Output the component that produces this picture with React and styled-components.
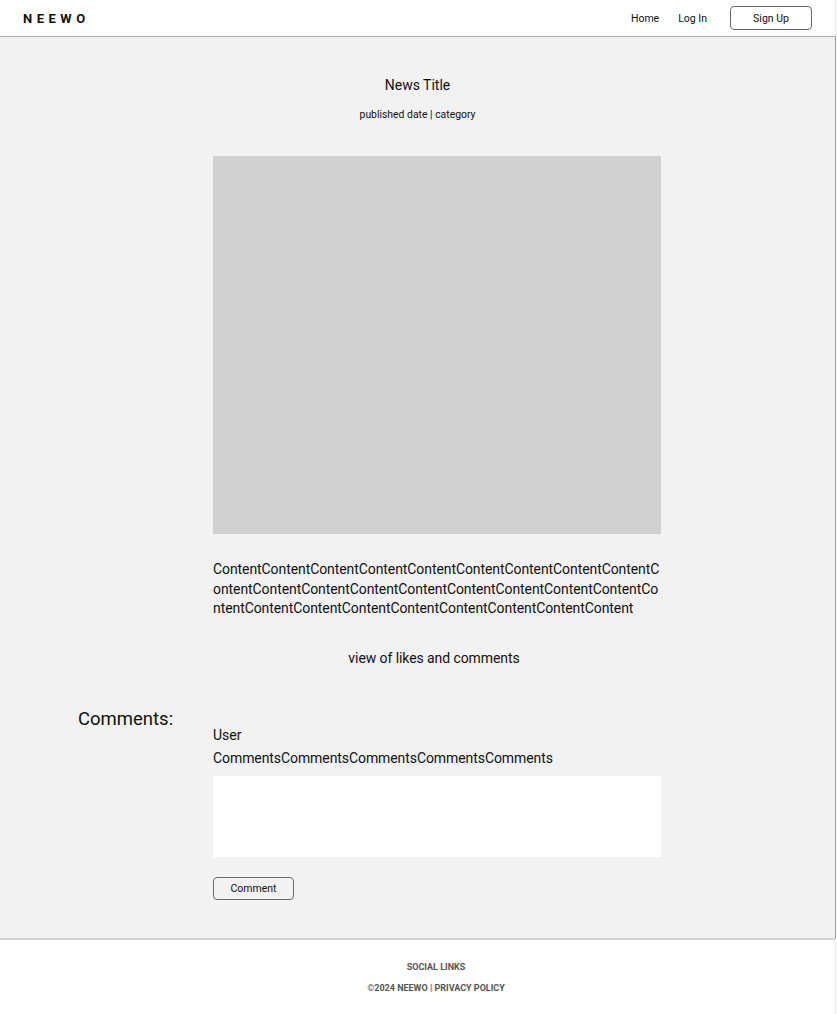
import styled, { createGlobalStyle } from "styled-components"

const GlobalStyle = createGlobalStyle`
    * {
        box-sizing: border-box;
    }

    body {
        margin: 0;
        background: #fff;
        font-family: Roboto, "Liberation Sans", sans-serif;
        color: #111;
    }
`

const Page = styled.div`
    width: 836px;
    display: flex;
    flex-direction: column;
`

const Header = styled.header`
    height: 37px;
    display: flex;
    align-items: center;
    justify-content: space-between;
    padding: 0 23px 0 23px;
    background: #fff;
    border-bottom: 1px solid #b0b0b0;
    border-right: 1px solid #ececec;
`

const Logo = styled.div`
    font-size: 13px;
    font-weight: 700;
    letter-spacing: 4.5px;
`

const Nav = styled.nav`
    display: flex;
    align-items: center;
    gap: 19px;
    font-size: 10.5px;
`

const NavLink = styled.a`
    color: #111;
    text-decoration: none;
    cursor: pointer;
`

const OutlineButton = styled.button`
    width: ${(props) => props.$width};
    height: ${(props) => props.$height};
    margin-left: ${(props) => props.$offset || "0"};
    background: transparent;
    border: 1px solid #6a6a6a;
    border-radius: 4px;
    font-family: Roboto, "Liberation Sans", sans-serif;
    font-size: 10.5px;
    color: #111;
    cursor: pointer;
`

const Main = styled.main`
    background: #f2f2f2;
    border-right: 1px solid #9a9a9a;
    padding: 40px 0 38px;
    display: flex;
    flex-direction: column;
`

const Title = styled.h1`
    margin: 0;
    font-size: 14px;
    font-weight: 400;
    line-height: 16px;
    text-align: center;
`

const Meta = styled.p`
    margin: 15px 0 0;
    font-size: 10.4px;
    line-height: 13px;
    text-align: center;
`

const Column = styled.div`
    width: 448px;
    margin-left: 213px;
    display: flex;
    flex-direction: column;
`

const ImagePlaceholder = styled.div`
    margin-top: 35px;
    height: 378px;
    background: #d0d0d0;
`

const Content = styled.p`
    margin: 26px 0 0;
    font-size: 14px;
    letter-spacing: -0.08px;
    line-height: 19.6px;
    word-break: break-all;
`

const Stats = styled.p`
    margin: 29px 6px 0 0;
    font-size: 14px;
    letter-spacing: -0.08px;
    line-height: 20px;
    text-align: center;
`

const CommentsRow = styled.section`
    margin-top: 39px;
    display: flex;
`

const CommentsLabel = styled.h2`
    width: 213px;
    margin: 0;
    padding-left: 78px;
    font-size: 18.5px;
    font-weight: 400;
    line-height: 24px;
`

const CommentsColumn = styled.div`
    width: 448px;
    padding-top: 18px;
    display: flex;
    flex-direction: column;
    align-items: flex-start;
`

const UserName = styled.div`
    font-size: 14px;
    line-height: 20px;
`

const CommentText = styled.div`
    margin-top: 3px;
    font-size: 14px;
    letter-spacing: -0.08px;
    line-height: 20px;
`

const CommentBox = styled.textarea`
    align-self: stretch;
    margin: 8px 0 20px;
    height: 81px;
    border: none;
    background: #fff;
    resize: none;
    outline: none;
`

const Footer = styled.footer`
    height: 76px;
    padding: 21px 0 0 37px;
    display: flex;
    flex-direction: column;
    align-items: center;
    gap: 9px;
    border-top: 2px solid #d2d2d2;
    border-right: 1px solid #ececec;
    font-size: 9px;
    font-weight: 700;
    color: #555;
    line-height: 12px;
`

export default function App() {
    const content = "Content".repeat(27)
    const comments = "Comments".repeat(5)

    return (
        <>
            <GlobalStyle />
            <Page>
                <Header>
                    <Logo>NEEWO</Logo>
                    <Nav>
                        <NavLink>Home</NavLink>
                        <NavLink>Log In</NavLink>
                        <OutlineButton $width="82px" $height="24px" $offset="4px">Sign Up</OutlineButton>
                    </Nav>
                </Header>

                <Main>
                    <Title>News Title</Title>
                    <Meta>published date | category</Meta>

                    <Column>
                        <ImagePlaceholder />
                        <Content>{content}</Content>
                        <Stats>view of likes and comments</Stats>
                    </Column>

                    <CommentsRow>
                        <CommentsLabel>Comments:</CommentsLabel>
                        <CommentsColumn>
                            <UserName>User</UserName>
                            <CommentText>{comments}</CommentText>
                            <CommentBox />
                            <OutlineButton $width="81px" $height="23px">Comment</OutlineButton>
                        </CommentsColumn>
                    </CommentsRow>
                </Main>

                <Footer>
                    <div>SOCIAL LINKS</div>
                    <div>©2024 NEEWO | PRIVACY POLICY</div>
                </Footer>
            </Page>
        </>
    )
}
